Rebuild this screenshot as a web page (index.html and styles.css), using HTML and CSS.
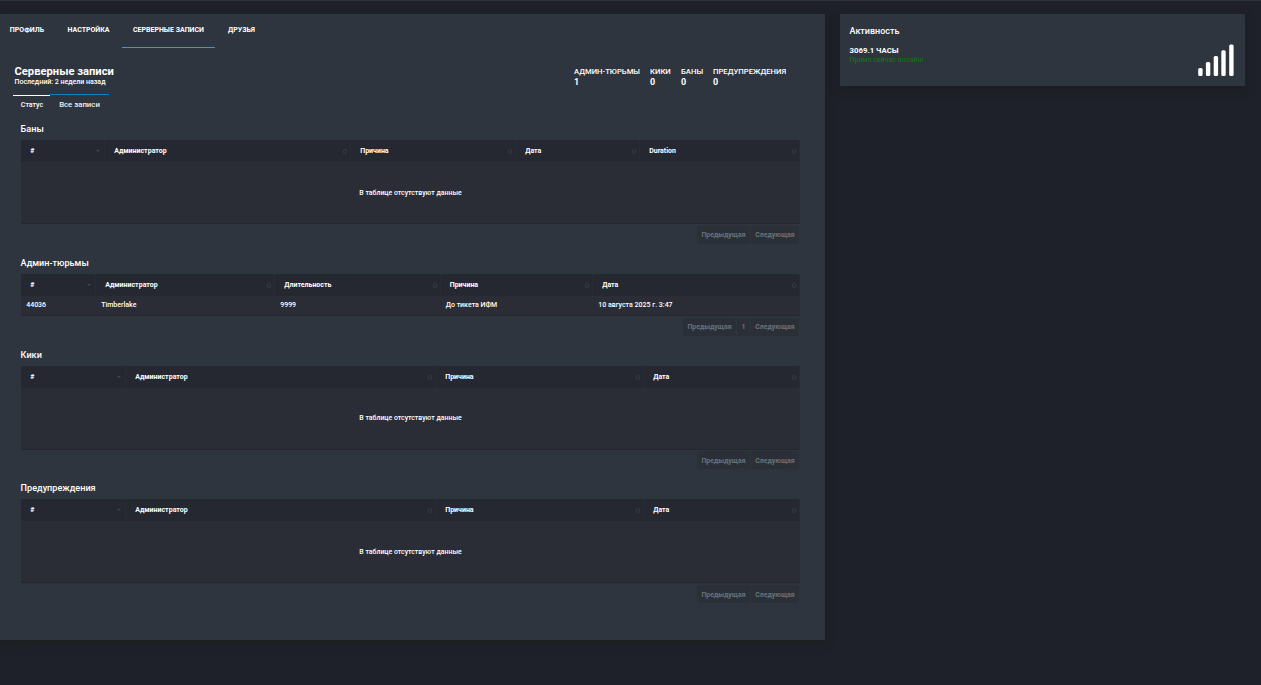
FILE: index.html
```html
<!DOCTYPE html>
<html lang="ru">
<head>
    <meta charset="UTF-8">
    <title>Серверные записи</title>
    <meta name="viewport" content="width=device-width, initial-scale=1.0">
    <link rel="stylesheet" href="styles.css">
</head>
<body>
    <div class="page">
        <main class="card main">
            <nav class="nav">
                <a class="nav-item profile">ПРОФИЛЬ</a>
                <a class="nav-item settings">НАСТРОЙКА</a>
                <a class="nav-item records active">СЕРВЕРНЫЕ ЗАПИСИ</a>
                <a class="nav-item friends">ДРУЗЬЯ</a>
            </nav>

            <header class="head">
                <div>
                    <h1>Серверные записи</h1>
                    <p class="last">Последний: 2 недели назад</p>
                </div>
                <div class="stats">
                    <div class="stat jails-stat"><span>АДМИН-ТЮРЬМЫ</span><b>1</b></div>
                    <div class="stat kicks-stat"><span>КИКИ</span><b>0</b></div>
                    <div class="stat bans-stat"><span>БАНЫ</span><b>0</b></div>
                    <div class="stat warns-stat"><span>ПРЕДУПРЕЖДЕНИЯ</span><b>0</b></div>
                </div>
            </header>

            <div class="tabs">
                <a class="tab status">Статус</a>
                <a class="tab all">Все записи</a>
            </div>

            <!-- Баны -->
            <section class="section bans">
                <h2>Баны</h2>
                <table>
                    <thead>
                        <tr>
                            <th class="asc">#</th>
                            <th>Администратор</th>
                            <th>Причина</th>
                            <th>Дата</th>
                            <th>Duration</th>
                        </tr>
                    </thead>
                    <tbody>
                        <tr><td class="empty" colspan="5">В таблице отсутствуют данные</td></tr>
                    </tbody>
                </table>
                <div class="pager"><a class="prev">Предыдущая</a><a class="next">Следующая</a></div>
            </section>

            <!-- Админ-тюрьмы -->
            <section class="section jails">
                <h2>Админ-тюрьмы</h2>
                <table>
                    <thead>
                        <tr>
                            <th class="asc">#</th>
                            <th>Администратор</th>
                            <th>Длительность</th>
                            <th>Причина</th>
                            <th>Дата</th>
                        </tr>
                    </thead>
                    <tbody>
                        <tr>
                            <td>44036</td>
                            <td>Timberlake</td>
                            <td>9999</td>
                            <td>До тикета ИФМ</td>
                            <td>10 августа 2025 г. 3:47</td>
                        </tr>
                    </tbody>
                </table>
                <div class="pager"><a class="prev">Предыдущая</a><a class="num">1</a><a class="next">Следующая</a></div>
            </section>

            <!-- Кики -->
            <section class="section kicks">
                <h2>Кики</h2>
                <table>
                    <thead>
                        <tr>
                            <th class="asc">#</th>
                            <th>Администратор</th>
                            <th>Причина</th>
                            <th>Дата</th>
                        </tr>
                    </thead>
                    <tbody>
                        <tr><td class="empty" colspan="4">В таблице отсутствуют данные</td></tr>
                    </tbody>
                </table>
                <div class="pager"><a class="prev">Предыдущая</a><a class="next">Следующая</a></div>
            </section>

            <!-- Предупреждения -->
            <section class="section warns">
                <h2>Предупреждения</h2>
                <table>
                    <thead>
                        <tr>
                            <th class="asc">#</th>
                            <th>Администратор</th>
                            <th>Причина</th>
                            <th>Дата</th>
                        </tr>
                    </thead>
                    <tbody>
                        <tr><td class="empty" colspan="4">В таблице отсутствуют данные</td></tr>
                    </tbody>
                </table>
                <div class="pager"><a class="prev">Предыдущая</a><a class="next">Следующая</a></div>
            </section>
        </main>

        <!-- Активность -->
        <aside class="card activity">
            <div>
                <h3>Активность</h3>
                <p class="hours">3069.1 ЧАСЫ</p>
                <p class="online">Прямо сейчас онлайн!</p>
            </div>
            <svg class="signal" width="36" height="32" viewBox="0 0 36 32" fill="#fff">
                <rect x="0.2" y="24" width="4.4" height="8" rx="1.5"/>
                <rect x="7.9" y="18" width="4.4" height="14" rx="1.5"/>
                <rect x="15.7" y="12" width="4.4" height="20" rx="1.5"/>
                <rect x="23.3" y="6.3" width="4.4" height="25.7" rx="1.5"/>
                <rect x="31.2" y="0.4" width="4.4" height="31.6" rx="1.5"/>
            </svg>
        </aside>
    </div>
</body>
</html>
```
FILE: styles.css
```css
* {
    margin: 0;
    padding: 0;
    box-sizing: border-box;
}

body {
    background: #1e2129;
    border-top: 1px solid #2d3139;
    color: #fff;
    font: 500 7px/10px Roboto, sans-serif;
    height: 685px;
    overflow: hidden;
}

.page {
    display: flex;
    align-items: flex-start;
    gap: 15px;
    padding-top: 13px;
}

.card {
    background: #2f353f;
    box-shadow: 0 4px 8px rgba(27, 29, 27, 0.6);
}

.main {
    width: 825px;
    height: 626px;
}

/* Верхнее меню */
.nav {
    display: flex;
    height: 34px;
}

.nav-item {
    flex: none;
    text-align: center;
    line-height: 32px;
    font-weight: 700;
    white-space: nowrap;
}

.profile {
    width: 54px;
}

.settings {
    width: 68px;
    padding-left: 1px;
}

.records {
    width: 93px;
}

.friends {
    width: 53px;
}

.nav-item.active {
    border-bottom: 1px solid #4a8be6;
}

/* Заголовок и счётчики */
.head {
    display: flex;
    justify-content: space-between;
    height: 46px;
    padding: 17px 38px 0 14.5px;
}

h1 {
    font-size: 11.2px;
    font-weight: 700;
    line-height: 13px;
}

.last {
    line-height: 8px;
}

.stats {
    display: flex;
}

.stat {
    display: flex;
    flex-direction: column;
    font-size: 7.7px;
    line-height: 13px;
    white-space: nowrap;
}

.stat b {
    font-size: 9px;
    line-height: 8px;
}

.jails-stat {
    width: 76px;
}

.kicks-stat {
    width: 31px;
}

.bans-stat {
    width: 32px;
}

.warns-stat {
    width: 74px;
}

/* Вкладки */
.tabs {
    display: flex;
    height: 28px;
    padding-left: 13px;
}

.tab {
    text-align: center;
    white-space: nowrap;
}

.status {
    width: 37px;
    height: 20px;
    margin-top: 1px;
    padding-left: 1px;
    border-top: 1px solid #fff;
    line-height: 18px;
}

.all {
    width: 59px;
    border-top: 1px solid #0a7fc4;
    font-size: 7.8px;
    line-height: 19px;
    color: #eee;
}

/* Таблицы записей */
.section {
    width: 779px;
    height: 134px;
    margin-left: 21px;
}

.jails {
    height: 92px;
}

.kicks {
    height: 133px;
}

h2 {
    height: 18px;
    font-size: 9.1px;
    font-weight: 500;
    line-height: 15px;
    text-indent: -0.4px;
}

table {
    width: 779px;
    table-layout: fixed;
    border-collapse: separate;
    border-spacing: 0;
    background: #2a2d35;
    border-bottom: 1px solid #24272e;
}

th {
    height: 22px;
    padding: 0 2px 0 9.2px;
    background: #252830;
    border-right: 1px solid #292c34;
    font-weight: 700;
    text-align: left;
    white-space: nowrap;
}

/* Стрелки сортировки */
th::after {
    content: "";
    float: right;
    width: 2px;
    height: 3px;
    margin: 3px 1px 0 0;
    border: 1px solid #373a40;
    border-radius: 2px;
}

th.asc::after {
    width: 0;
    height: 0;
    margin: 4px 2px 0 0;
    border: 2px solid transparent;
    border-top-color: #404347;
    border-bottom: 0;
    border-radius: 0;
}

td {
    height: 19px;
    padding: 0 5.2px;
    line-height: 19px;
    vertical-align: top;
    white-space: nowrap;
}

td.empty {
    height: 61px;
    padding-top: 1px;
    line-height: 60px;
    text-align: center;
    font-size: 6.95px;
}

.kicks td.empty {
    padding-top: 0;
}

.bans th:nth-child(1) { width: 84px; }
.bans th:nth-child(2) { width: 246px; }
.bans th:nth-child(3) { width: 165px; }
.bans th:nth-child(4) { width: 124px; }

.jails th:nth-child(1) { width: 75px; }
.jails th:nth-child(2) { width: 179px; }
.jails th:nth-child(3) { width: 165.5px; }
.jails th:nth-child(4) { width: 152.5px; }

.kicks th:nth-child(1),
.warns th:nth-child(1) { width: 105px; }
.kicks th:nth-child(2),
.warns th:nth-child(2) { width: 310px; }
.kicks th:nth-child(3),
.warns th:nth-child(3) { width: 208px; }

.pager {
    display: flex;
    justify-content: flex-end;
    gap: 1px;
    padding: 2px 1px 0 0;
}

.kicks .pager {
    padding-top: 1px;
}

.pager a {
    height: 18px;
    background: #2b3038;
    border-radius: 1px;
    color: #6c7077;
    line-height: 18px;
    text-align: center;
    font-size: 6.9px;
    font-weight: 700;
}

.kicks .pager a,
.warns .pager a {
    line-height: 20px;
}

.prev {
    width: 53px;
}

.num {
    width: 13px;
}

.next {
    width: 48px;
}

/* Активность */
.activity {
    display: flex;
    justify-content: space-between;
    width: 405px;
    height: 72px;
    padding: 11px 11px 0 9.5px;
}

h3 {
    font-size: 9px;
    font-weight: 500;
    line-height: 12px;
}

.hours {
    margin-top: 9px;
    font-size: 7.8px;
    font-weight: 700;
}

.online {
    color: #107a10;
    font-weight: 400;
    line-height: 9px;
}

.signal {
    margin-top: 19px;
}
```
